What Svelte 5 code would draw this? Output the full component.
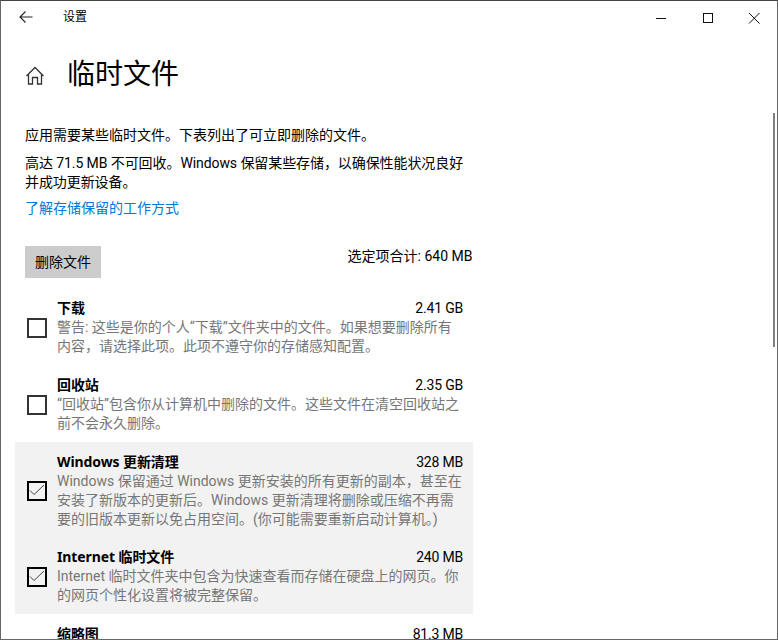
<script>
  const items = [
    { t: '下载', s: '2.41 GB', d: '警告: 这些是你的个人“下载”文件夹中的文件。如果想要删除所有\n内容，请选择此项。此项不遵守你的存储感知配置。', c: false },
    { t: '回收站', s: '2.35 GB', d: '“回收站”包含你从计算机中删除的文件。这些文件在清空回收站之\n前不会永久删除。', c: false },
    { t: 'Windows 更新清理', s: '328 MB', d: 'Windows 保留通过 Windows 更新安装的所有更新的副本，甚至在\n安装了新版本的更新后。Windows 更新清理将删除或压缩不再需\n要的旧版本更新以免占用空间。(你可能需要重新启动计算机。)', c: true, tall: true },
    { t: 'Internet 临时文件', s: '240 MB', d: 'Internet 临时文件夹中包含为快速查看而存储在硬盘上的网页。你\n的网页个性化设置将被完整保留。', c: true },
    { t: '缩略图', s: '81.3 MB', d: 'Windows 保留所有图片、视频和文档的缩略图副本，\n以便在你打开文件夹时可以快速显示它们。', c: false }
  ];
</script>

<div class="win">
  <header class="bar">
    <svg class="back" width="14" height="12" viewBox="0 0 14 12"><path d="M1 6H13.500M6.500 .5 1 6l5.500 5.500" fill="none" stroke="#222" stroke-width="1.100"/></svg>
    <span class="apptitle">设置</span>
    <div class="ctl">
      <svg width="46" height="32" viewBox="0 0 46 32"><path d="M16 17.500h10" stroke="#111" stroke-width="1"/></svg>
      <svg width="46" height="32" viewBox="0 0 46 32"><rect x="17.500" y="12.500" width="9" height="9" fill="none" stroke="#111"/></svg>
      <svg width="46" height="32" viewBox="0 0 46 32"><path d="M17 12l10.500 10.500M27.500 12 17 22.500" fill="none" stroke="#111"/></svg>
    </div>
  </header>
  <div class="scrollthumb"></div>
  <main class="page">
    <div class="head">
      <svg class="home" width="20" height="20" viewBox="0 0 20 20"><path d="M1.500 11 10 2.500l8.500 8.500M3.500 9V19H7.500V12.500h5V19H16.500V9" fill="none" stroke="#333" stroke-width="1.300"/></svg>
      <h1>临时文件</h1>
    </div>
    <div class="intro">
      <p class="p1">应用需要某些临时文件。下表列出了可立即删除的文件。</p>
      <p class="p2">高达 71.5 MB 不可回收。Windows 保留某些存储，以确保性能状况良好<br/>并成功更新设备。</p>
      <a class="link" href="#top">了解存储保留的工作方式</a>
      <div class="actions">
        <button type="button">删除文件</button>
        <span>选定项合计: 640 MB</span>
      </div>
    </div>
    <div class="list">
      {#each items as it}
        <div class="item" class:on={it.c} class:tall={it.tall}>
          <span class="box">
            {#if it.c}<svg width="16" height="16" viewBox="0 0 16 16"><path d="M1 7.500 5 11.500 15 2" fill="none" stroke="#444" stroke-width="1"/></svg>{/if}
          </span>
          <div class="body">
            <div class="top"><b>{it.t}</b><span>{it.s}</span></div>
            <div class="desc">{it.d}</div>
          </div>
        </div>
      {/each}
    </div>
  </main>
</div>

<style>
  :global(body) { margin: 0; overflow: hidden; background: #fff; }
  .win {
    position: relative;
    box-sizing: border-box;
    width: 778px;
    height: 640px;
    overflow: hidden;
    border: 1px solid #666;
    border-top-color: #444;
    background: #fff;
    color: #000;
    font-family: Roboto, "Noto Sans CJK SC", sans-serif;
    font-size: 14px;
    line-height: 19px;
  }
  .bar { display: flex; align-items: center; height: 32px; }
  .back { margin-left: 18px; }
  .apptitle { margin: 1px 0 0 30px; font-size: 12px; }
  .ctl { display: flex; margin-left: auto; margin-right: -1px; }
  .scrollthumb { position: absolute; right: 2px; top: 112px; width: 2px; height: 234px; background: #808080; }
  .page { padding: 0 0 0 14px; width: 458px; }
  .head { display: flex; align-items: center; height: 50px; margin-top: 17px; padding-left: 10px; }
  .home { flex: none; }
  h1 { margin: 0 0 0 22px; font-size: 28px; font-weight: 400; line-height: 40px; }
  .intro { padding-left: 10px; }
  p { margin: 0; }
  .p1 { margin-top: 26px; }
  .p2 { margin-top: 9px; letter-spacing: -.08px; }
  .link { display: block; margin-top: 7px; color: #0078d7; text-decoration: none; }
  .actions { display: flex; justify-content: space-between; align-items: flex-start; margin-top: 28px; }
  .actions span { margin: 1px .5px 0 0; }
  button { width: 76px; height: 32px; border: 0; padding: 0; background: #ccc; color: #000; font: inherit; }
  .list { margin-top: 10px; }
  .item { display: flex; align-items: center; box-sizing: border-box; padding: 10px 10px 9px 12px; }
  .item.tall { padding-bottom: 8px; }
  .item.on { background: #f2f2f2; }
  .box { flex: none; box-sizing: border-box; width: 20px; height: 20px; border: 2px solid #333; margin-top: 1px; display: flex; align-items: center; justify-content: center; }
  .on .box { border-color: #000; }
  .body { margin-left: 10px; flex: 1; }
  .top { display: flex; justify-content: space-between; line-height: 20px; }
  .top b { font-family: "Noto Sans", "Noto Sans CJK SC", sans-serif; font-weight: 700; letter-spacing: -.1px; }
  .top span { letter-spacing: -.2px; }
  .desc { white-space: pre-line; color: #767676; }
</style>
